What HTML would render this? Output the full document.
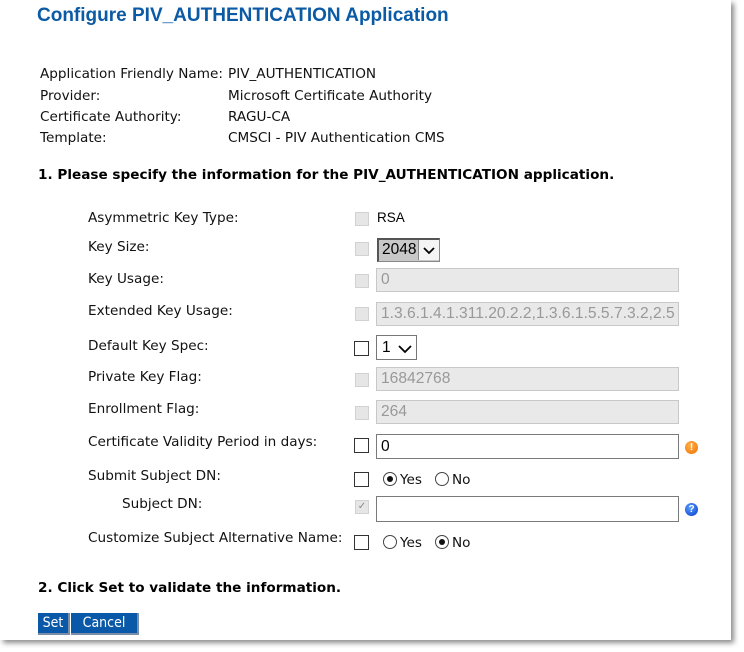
<!DOCTYPE html>
<html><head><meta charset="utf-8"><style>
html,body{margin:0;padding:0;background:#fff;width:744px;height:652px;overflow:hidden;position:relative}
.panel{position:absolute;left:0;top:0;width:731px;height:640px;background:#fff;box-shadow:3px 3px 5px rgba(0,0,0,.45)}
.t{position:absolute;font-family:"DejaVu Sans","Liberation Sans",sans-serif;font-size:13.6px;color:#111;line-height:16px;white-space:nowrap}
.b{font-weight:bold;font-size:13.6px;color:#000}
h1{position:absolute;left:37px;top:5px;margin:0;font-family:"Liberation Sans",sans-serif;font-weight:bold;font-size:19px;color:#0b5aa5;white-space:nowrap}
.cb{position:absolute;width:12px;height:12px;background:#e6e6e6;border:1px solid #d2d2d2}
.cb.on{background:#fff;border:1px solid #333}
.in{position:absolute;left:376px;width:303px;height:24px;box-sizing:border-box;border:1px solid #c8c8c8;background:#e9e9e9;font-family:"Liberation Sans",sans-serif;font-size:15.6px;color:#999;line-height:22px;padding-left:4px;white-space:nowrap;overflow:hidden}
.in.w{background:#fff;border:1px solid #7a7a7a;color:#000}
.rad{position:absolute;width:14px;height:14px;border:1px solid #444;border-radius:50%;box-sizing:border-box;background:#fff}
.rad.on::after{content:"";position:absolute;left:3px;top:3px;width:6px;height:6px;border-radius:50%;background:#111}
.btn{position:absolute;top:613px;height:22px;background:#0a58a8;color:#fff;font-family:"DejaVu Sans Condensed","DejaVu Sans",sans-serif;font-size:14px;line-height:21px;text-align:center;border-right:2px solid #7a8ea8;border-bottom:2px solid #7a8ea8;box-sizing:border-box}
.ico{position:absolute;width:13px;height:13px;border-radius:50%;color:#fff;font:bold 10px "Liberation Sans",sans-serif;text-align:center;line-height:13px}
</style></head><body>
<div class="panel"></div>
<h1>Configure PIV_AUTHENTICATION Application</h1>

<div class="t" style="left:40px;top:66px">Application Friendly Name:</div>
<div class="t" style="left:228px;top:66px">PIV_AUTHENTICATION</div>
<div class="t" style="left:40px;top:88px">Provider:</div>
<div class="t" style="left:228px;top:88px">Microsoft Certificate Authority</div>
<div class="t" style="left:40px;top:109px">Certificate Authority:</div>
<div class="t" style="left:228px;top:109px">RAGU-CA</div>
<div class="t" style="left:40px;top:130px">Template:</div>
<div class="t" style="left:228px;top:130px">CMSCI - PIV Authentication CMS</div>

<div class="t b" style="left:38px;top:167px">1. Please specify the information for the PIV_AUTHENTICATION application.</div>

<div class="t" style="left:88px;top:210px">Asymmetric Key Type:</div>
<div class="cb" style="left:355px;top:212px"></div>
<div class="t" style="left:377px;top:210px;font-family:'Liberation Sans',sans-serif;font-size:13.5px;color:#000">RSA</div>

<div class="t" style="left:88px;top:239px">Key Size:</div>
<div class="cb" style="left:355px;top:242px"></div>
<div style="position:absolute;left:377px;top:238px;width:63px;height:24px;box-sizing:border-box;border:1px solid #888;border-left:2px solid #555;border-top:2px solid #555;background:#c8c8c8;font:15.5px 'Liberation Sans',sans-serif;line-height:20px;padding-left:3px">2048<span style="position:absolute;right:0;top:0;width:20px;height:20px;background:#f4f4f4;border-left:1px solid #888"><svg width="20" height="20"><path d="M5 8 L10 13 L15 8" stroke="#000" stroke-width="1.8" fill="none"/></svg></span></div>

<div class="t" style="left:88px;top:271px">Key Usage:</div>
<div class="cb" style="left:355px;top:274px"></div>
<div class="in" style="top:268px">0</div>

<div class="t" style="left:88px;top:303px">Extended Key Usage:</div>
<div class="cb" style="left:355px;top:307px"></div>
<div class="in" style="top:302px">1.3.6.1.4.1.311.20.2.2,1.3.6.1.5.5.7.3.2,2.5</div>

<div class="t" style="left:88px;top:338px">Default Key Spec:</div>
<div class="cb on" style="left:354px;top:341px;width:13px;height:13px"></div>
<div style="position:absolute;left:376px;top:335px;width:41px;height:25px;box-sizing:border-box;border:1px solid #777;background:#fff;font:15.5px 'Liberation Sans',sans-serif;line-height:23px;padding-left:5px">1<svg style="position:absolute;left:18px;top:3px" width="20" height="18"><path d="M4 7 L10 13 L16 7" stroke="#000" stroke-width="1.8" fill="none"/></svg></div>

<div class="t" style="left:88px;top:369px">Private Key Flag:</div>
<div class="cb" style="left:355px;top:373px"></div>
<div class="in" style="top:367px">16842768</div>

<div class="t" style="left:88px;top:401px">Enrollment Flag:</div>
<div class="cb" style="left:355px;top:406px"></div>
<div class="in" style="top:400px">264</div>

<div class="t" style="left:88px;top:434px">Certificate Validity Period in days:</div>
<div class="cb on" style="left:354px;top:438px;width:13px;height:13px"></div>
<div class="in w" style="top:434px;height:25px;line-height:23px;width:303px">0</div>
<div class="ico" style="left:685px;top:441px;background:radial-gradient(circle at 40% 35%,#ffb04a,#f07000)">!</div>

<div class="t" style="left:88px;top:468px">Submit Subject DN:</div>
<div class="cb on" style="left:354px;top:472px;width:13px;height:13px"></div>
<div class="rad on" style="left:383px;top:472px"></div>
<div class="t" style="left:400px;top:472px">Yes</div>
<div class="rad" style="left:435px;top:472px"></div>
<div class="t" style="left:452px;top:472px">No</div>

<div class="t" style="left:122px;top:496px">Subject DN:</div>
<div class="cb" style="left:355px;top:500px;font:10px sans-serif;color:#888;text-align:center;line-height:12px">✓</div>
<div class="in w" style="top:496px;height:26px;width:303px"></div>
<div class="ico" style="left:685px;top:503px;background:radial-gradient(circle at 40% 35%,#5aa0ff,#0638c8)">?</div>

<div class="t" style="left:88px;top:530px">Customize Subject Alternative Name:</div>
<div class="cb on" style="left:354px;top:535px;width:13px;height:13px"></div>
<div class="rad" style="left:383px;top:535px"></div>
<div class="t" style="left:400px;top:535px">Yes</div>
<div class="rad on" style="left:435px;top:535px"></div>
<div class="t" style="left:452px;top:535px">No</div>

<div class="t b" style="left:38px;top:580px">2. Click Set to validate the information.</div>

<div class="btn" style="left:38px;width:32px">Set</div>
<div class="btn" style="left:71px;width:68px">Cancel</div>
</body></html>
